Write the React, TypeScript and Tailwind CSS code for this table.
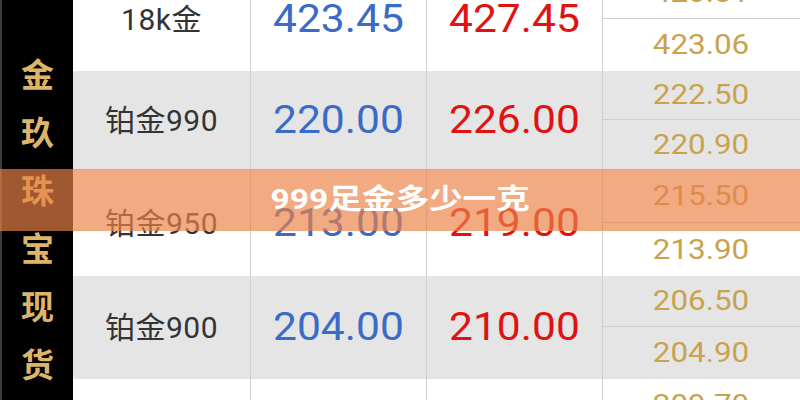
import React from "react";

type Row = {
  name: string;
  buy: string;
  sell: string;
  top: string;
  bottom: string;
  h: number;
  topH: number;
  gray: boolean;
};

const rows: Row[] = [
  { name: "18k金", buy: "423.45", sell: "427.45", top: "420.81", bottom: "423.06", h: 104, topH: 52, gray: false },
  { name: "铂金990", buy: "220.00", sell: "226.00", top: "222.50", bottom: "220.90", h: 99, topH: 49, gray: true },
  { name: "铂金950", buy: "213.00", sell: "219.00", top: "215.50", bottom: "213.90", h: 106, topH: 53, gray: false },
  { name: "铂金900", buy: "204.00", sell: "210.00", top: "206.50", bottom: "204.90", h: 103, topH: 51, gray: true },
  { name: "", buy: "", sell: "", top: "209.70", bottom: "", h: 104, topH: 52, gray: false },
];

const cjk = { fontFamily: "Roboto, 'Noto Sans CJK SC', sans-serif" };

export default function App() {
  return (
    <div className="relative w-[800px] h-[400px] overflow-hidden bg-white flex">
      <div className="w-[73px] h-full bg-black border-l-2 border-[#3c3c3c] flex flex-col items-center pt-[44px] shrink-0">
        {["金", "玖", "珠", "宝", "现", "货"].map((c) => (
          <div
            key={c}
            className="h-[58px] leading-[58px] text-[33px] font-bold text-[#dcb56b]"
            style={{ fontFamily: "'Noto Sans CJK SC', sans-serif" }}
          >
            {c}
          </div>
        ))}
      </div>
      <div className="flex-1 flex flex-col -mt-[33px]">
        {rows.map((r, i) => (
          <div
            key={i}
            className={`flex shrink-0 ${r.gray ? "bg-[#e5e5e5]" : "bg-white"}`}
            style={{ height: r.h }}
          >
            <div
              className="w-[178px] border-r border-[#cfcfcf] flex items-center justify-center text-[30px] text-[#333333] tracking-[0.5px]"
              style={cjk}
            >
              {r.name}
            </div>
            <div
              className="w-[176px] border-r border-[#cfcfcf] flex items-center justify-center text-[38px] text-[#3a6bc6]"
              style={{ fontFamily: "Roboto, sans-serif" }}
            >
              <span className="inline-block scale-x-[1.12]">{r.buy}</span>
            </div>
            <div
              className="w-[176px] border-r border-[#cfcfcf] flex items-center justify-center text-[38px] text-[#e01212]"
              style={{ fontFamily: "Roboto, sans-serif" }}
            >
              <span className="inline-block scale-x-[1.12]">{r.sell}</span>
            </div>
            <div className="flex-1 flex flex-col text-[28px] text-[#c9a24e]" style={{ fontFamily: "Roboto, sans-serif" }}>
              <div className="flex items-center justify-center border-b border-[#cfcfcf] shrink-0" style={{ height: r.topH }}>
                <span className="inline-block scale-x-[1.12]">{r.top}</span>
              </div>
              <div className="flex-1 flex items-center justify-center">
                <span className="inline-block scale-x-[1.12]">{r.bottom}</span>
              </div>
            </div>
          </div>
        ))}
      </div>
      <div className="absolute left-0 top-[169px] w-full h-[62px] bg-[rgba(235,129,71,0.68)] flex items-center justify-center">
        <span
          className="inline-block text-white font-bold text-[28px] scale-x-[1.2]"
          style={{ fontFamily: "Roboto, 'Noto Sans CJK SC', sans-serif" }}
        >
          999足金多少一克
        </span>
      </div>
    </div>
  );
}
